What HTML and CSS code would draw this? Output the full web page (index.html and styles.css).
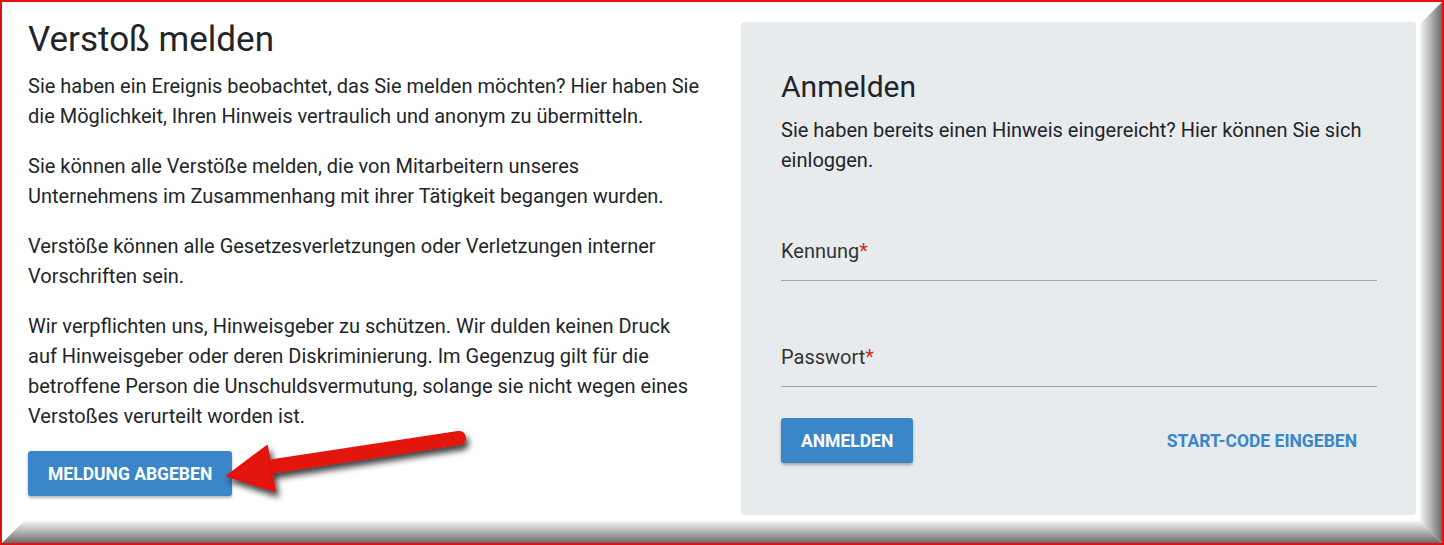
FILE: index.html
```html
<!DOCTYPE html>
<html lang="de">
<head>
    <meta charset="UTF-8">
    <meta name="viewport" content="width=device-width, initial-scale=1.0">
    <title>Verstoß melden</title>
    <link rel="stylesheet" href="styles.css">
</head>
<body>
    <div class="frame">
        <div class="sheet">
            <section class="intro">
                <h1>Verstoß melden</h1>
                <p>Sie haben ein Ereignis beobachtet, das Sie melden möchten? Hier haben Sie die Möglichkeit, Ihren Hinweis vertraulich und anonym zu übermitteln.</p>
                <p>Sie können alle Verstöße melden, die von Mitarbeitern unseres Unternehmens im Zusammenhang mit ihrer Tätigkeit begangen wurden.</p>
                <p>Verstöße können alle Gesetzesverletzungen oder Verletzungen interner Vorschriften sein.</p>
                <p>Wir verpflichten uns, Hinweisgeber zu schützen. Wir dulden keinen Druck auf Hinweisgeber oder deren Diskriminierung. Im Gegenzug gilt für die betroffene Person die Unschuldsvermutung, solange sie nicht wegen eines Verstoßes verurteilt worden ist.</p>
                <button type="button" class="btn">Meldung abgeben</button>
            </section>

            <section class="login">
                <h2>Anmelden</h2>
                <p>Sie haben bereits einen Hinweis eingereicht? Hier können Sie sich einloggen.</p>
                <form class="login-form">
                    <div class="field">
                        <label for="kennung">Kennung<span class="req">*</span></label>
                    </div>
                    <div class="field">
                        <label for="passwort">Passwort<span class="req">*</span></label>
                    </div>
                    <div class="actions">
                        <button type="submit" class="btn">Anmelden</button>
                        <button type="button" class="btn-text">Start-Code eingeben</button>
                    </div>
                </form>
            </section>
        </div>
        <div class="edge-right"></div>
        <div class="edge-bottom"></div>

        <!-- annotation arrow pointing at the report button -->
        <svg class="arrow" width="1444" height="545" viewBox="0 0 1444 545">
            <defs>
                <filter id="arrowShadow" x="-10%" y="-30%" width="130%" height="180%">
                    <feDropShadow dx="3" dy="5" stdDeviation="3" flood-color="#000" flood-opacity="0.75"/>
                </filter>
            </defs>
            <g filter="url(#arrowShadow)">
                <line x1="268" y1="467" x2="459" y2="438" stroke="#e3120f" stroke-width="14" stroke-linecap="round"/>
                <polygon points="227,476 267,446 275,491" fill="#e3120f" stroke="#e3120f" stroke-width="2" stroke-linejoin="round"/>
            </g>
        </svg>
    </div>
</body>
</html>
```

FILE: styles.css
```css
* {
    margin: 0;
    padding: 0;
    box-sizing: border-box;
    font-family: Roboto, "Liberation Sans", sans-serif;
}
body {
    background: #fff;
    color: #212529;
}
.frame {
    position: relative;
    width: 1444px;
    height: 545px;
    border: 2px solid #e3120f;
    display: grid;
    grid-template-columns: 1fr 22px;
    grid-template-rows: 1fr 22px;
    overflow: hidden;
}
.sheet {
    background: #fff;
    padding: 20px 3px 4px 26px;
    display: grid;
    grid-template-columns: 673px 675px;
    column-gap: 40px;
    align-items: start;
}
.edge-right {
    grid-column: 2;
    grid-row: 1 / 3;
    background: linear-gradient(to right, #f4f4f4, #b9b9b9 45%, #6a6a6a);
    clip-path: polygon(0 22px, 100% 0, 100% 100%, 0 calc(100% - 22px));
}
.edge-bottom {
    grid-column: 1 / 3;
    grid-row: 2;
    background: linear-gradient(to bottom, #f4f4f4, #b9b9b9 45%, #6a6a6a);
    clip-path: polygon(22px 0, calc(100% - 22px) 0, 100% 100%, 0 100%);
}

h1 {
    font-size: 35px;
    font-weight: 400;
    line-height: 1;
    margin-bottom: 14px;
}
.intro p {
    font-size: 20px;
    line-height: 30px;
    margin-bottom: 20px;
}
.btn {
    background: #3a86c8;
    color: #fff;
    border: none;
    border-radius: 3px;
    height: 45px;
    padding: 0 20px;
    font-size: 17.5px;
    font-weight: 700;
    text-transform: uppercase;
    box-shadow: 0 2px 3px rgba(0, 0, 0, 0.3);
    cursor: pointer;
}

.login {
    background: #e8ebee;
    border-radius: 4px;
    height: 493px;
    padding: 47px 39px 0 40px;
}
h2 {
    font-size: 30px;
    font-weight: 400;
    line-height: 36px;
    margin-bottom: 10px;
}
.login p {
    font-size: 20px;
    line-height: 30px;
}
.field {
    padding: 61px 0 14px;
    border-bottom: 1px solid #a3a5a8;
}
.field label {
    display: block;
    font-size: 20px;
    line-height: 30px;
    color: #333;
}
.req {
    color: #c8321e;
}
.actions {
    display: flex;
    justify-content: space-between;
    align-items: center;
    margin-top: 31px;
}
.btn-text {
    background: none;
    border: none;
    color: #3a86c8;
    font-size: 17.5px;
    font-weight: 700;
    text-transform: uppercase;
    padding: 0 20px;
    height: 45px;
    cursor: pointer;
}

.arrow {
    position: absolute;
    left: -2px;
    top: -2px;
    pointer-events: none;
}
```
